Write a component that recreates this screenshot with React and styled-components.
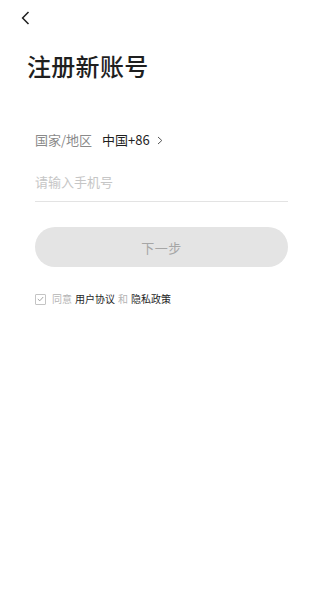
import styled, { createGlobalStyle } from "styled-components";

const GlobalStyle = createGlobalStyle`
  html, body {
    margin: 0;
    padding: 0;
    background: #fff;
  }
  body {
    font-family: "Noto Sans CJK SC", "Noto Sans", sans-serif;
    color: #222;
  }
  * {
    box-sizing: border-box;
  }
`;

const Page = styled.div`
  width: 309px;
  min-height: 611px;
  background: #fff;
  display: flex;
  flex-direction: column;
`;

const Header = styled.div`
  height: 36px;
  padding: 11px 0 0 21px;
`;

const BackButton = styled.button`
  border: none;
  background: transparent;
  padding: 0;
  width: 9px;
  height: 14px;
  display: block;
  cursor: pointer;
`;

const Title = styled.h1`
  margin: 14px 0 0 27px;
  font-size: 24px;
  line-height: 32px;
  font-weight: 500;
  color: #1f1f1f;
  letter-spacing: 0.3px;
`;

const Form = styled.div`
  padding: 0 21px 0 35px;
  display: flex;
  flex-direction: column;
`;

const CountryRow = styled.div`
  margin-top: 48px;
  height: 20px;
  display: flex;
  align-items: center;
  font-size: 13px;
  line-height: 20px;
`;

const Label = styled.span`
  color: #8a8a8a;
  margin-right: 10px;
`;

const Value = styled.span`
  color: #1f1f1f;
  margin-right: 7px;
`;

const PhoneInput = styled.input`
  margin-top: 11px;
  height: 41px;
  border: none;
  border-bottom: 1px solid #e3e3e3;
  outline: none;
  padding: 0;
  font-family: inherit;
  font-size: 13px;
  color: #222;
  background: transparent;
  &::placeholder {
    color: #c6c6c6;
  }
`;

const NextButton = styled.button`
  margin-top: 25px;
  height: 40px;
  border: none;
  border-radius: 20px;
  background: #e4e4e4;
  color: #a6a6a6;
  font-family: inherit;
  font-size: 13px;
  letter-spacing: 0.5px;
`;

const Agreement = styled.label`
  margin-top: 25px;
  height: 14px;
  display: flex;
  align-items: center;
  font-size: 10px;
  line-height: 14px;
`;

const CheckBox = styled.span`
  width: 11px;
  height: 11px;
  border: 1px solid #c4c4c4;
  border-radius: 1px;
  display: inline-flex;
  align-items: center;
  justify-content: center;
  margin-right: 6px;
`;

const Word = styled.span`
  color: ${(p) => (p.$link ? "#1f1f1f" : "#b4b4b4")};
  margin-right: 3px;
`;

export default function App() {
  return (
    <>
      <GlobalStyle />
      <Page>
        <Header>
          <BackButton aria-label="返回">
            <svg width="9" height="14" viewBox="0 0 9 14">
              <path
                d="M7.5 1 L1.6 7 L7.5 13"
                fill="none"
                stroke="#1f1f1f"
                strokeWidth="1.5"
              />
            </svg>
          </BackButton>
        </Header>
        <Title>注册新账号</Title>
        <Form>
          <CountryRow>
            <Label>国家/地区</Label>
            <Value>中国+86</Value>
            <svg width="6" height="9" viewBox="0 0 6 9">
              <path d="M1 1 L4.8 4.5 L1 8" fill="none" stroke="#555" strokeWidth="1" />
            </svg>
          </CountryRow>
          <PhoneInput placeholder="请输入手机号" />
          <NextButton>下一步</NextButton>
          <Agreement>
            <CheckBox>
              <svg width="7" height="6" viewBox="0 0 7 6">
                <path d="M0.8 3 L2.8 4.8 L6.2 1" fill="none" stroke="#9a9a9a" strokeWidth="0.9" />
              </svg>
            </CheckBox>
            <Word>同意</Word>
            <Word $link>用户协议</Word>
            <Word>和</Word>
            <Word $link>隐私政策</Word>
          </Agreement>
        </Form>
      </Page>
    </>
  );
}
